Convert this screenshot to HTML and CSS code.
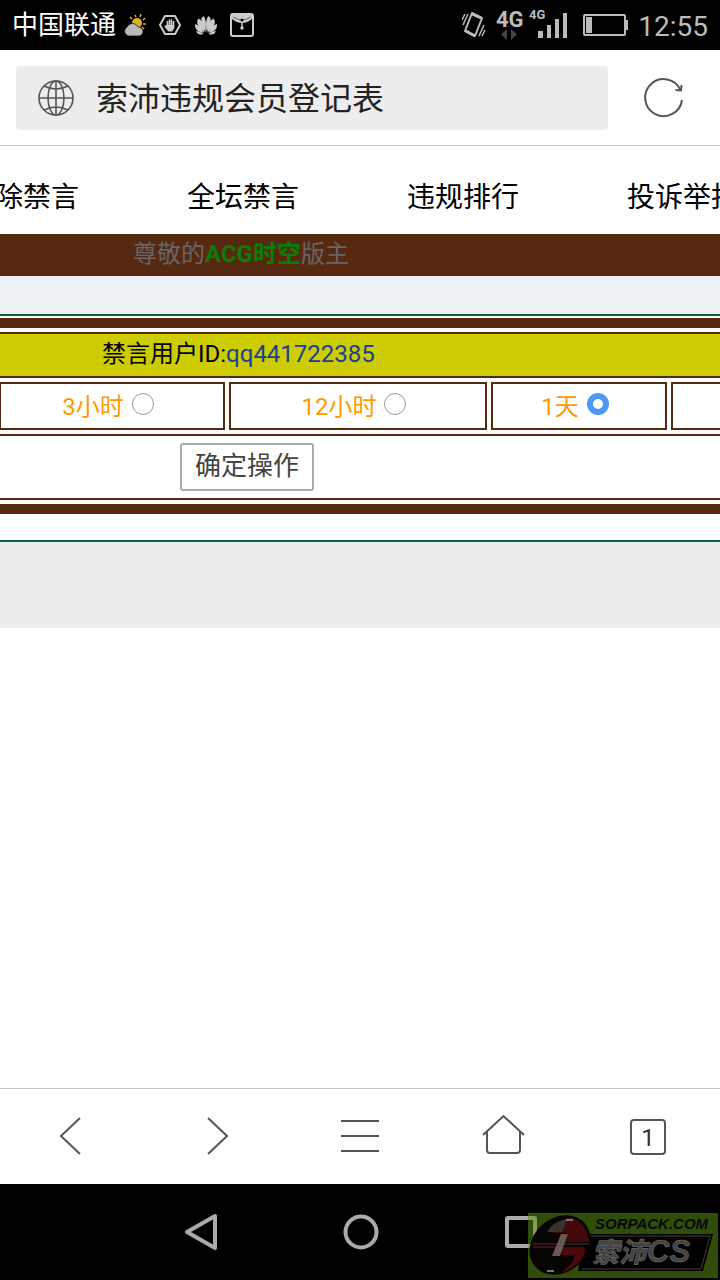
FILE: index.html
```html
<!DOCTYPE html>
<html lang="zh-CN">
<head>
  <meta charset="UTF-8">
  <meta name="viewport" content="width=device-width, initial-scale=1">
  <title>索沛违规会员登记表</title>
  <link rel="stylesheet" href="styles.css">
</head>
<body>
  <div class="status-bar">
    <div class="status-left">
      <span class="carrier">中国联通</span>
      <svg width="24" height="24" viewBox="0 0 24 24">
        <g stroke="#d9ae2c" stroke-width="1.500"><path d="M14 4l-1-2M18 4l1-3M21 7l2-2M21 11h3M20 14l2 2M10 6L8 4"/></g>
        <circle cx="15" cy="10" r="5" fill="#d9ae2c"/>
        <path d="M6 23a5 5 0 0 1-1-9 6 6 0 0 1 11 0 4.500 4.500 0 0 1 1 9z" fill="#b9b9b9" stroke="#000" stroke-width="0.700"/>
      </svg>
      <svg width="24" height="24" viewBox="0 0 24 24">
        <path d="M7 3h10l5 9-5 9H7l-5-9z" fill="none" stroke="#ccc" stroke-width="2" stroke-linejoin="round"/>
        <path d="M9.500 13V8.500M11.500 12V7M13.500 12V7M15.500 13V8.500" stroke="#ccc" stroke-width="1.600" stroke-linecap="round"/>
        <path d="M8.700 12h7.600v3l-2 3.500h-4l-4-5 1-1z" fill="#ccc"/>
      </svg>
      <svg width="24" height="24" viewBox="0 0 24 24" fill="#ccc">
        <path d="M11.500 19Q4 7 9.500 3Q13 6 11.500 19z"/>
        <path d="M12.500 19Q20 7 14.500 3Q11 6 12.500 19z"/>
        <path d="M10.500 19.500Q0 11 4.500 5.500Q9 7 10.500 19.500z"/>
        <path d="M13.500 19.500Q24 11 19.500 5.500Q15 7 13.500 19.500z"/>
        <path d="M9.500 20Q0 18 1 11Q6 12 9.500 20z"/>
        <path d="M14.500 20Q24 18 23 11Q18 12 14.500 20z"/>
        <path d="M9.500 21Q4 23 2 18Q6 18 9.500 21z"/>
        <path d="M14.500 21Q20 23 22 18Q18 18 14.500 21z"/>
      </svg>
      <svg width="24" height="24" viewBox="0 0 24 24">
        <rect x="1" y="1" width="22" height="22" rx="2" fill="none" stroke="#ccc" stroke-width="2"/>
        <path d="M2 1h20v5q-5 4-10 4T2 6z" fill="#ccc"/>
        <path d="M3 4q9 6 18 0" fill="none" stroke="#000" stroke-width="0.500"/>
        <path d="M12 9v7" stroke="#ccc" stroke-width="1.500"/>
        <circle cx="12" cy="7" r="1.500" fill="#000"/>
        <circle cx="12" cy="15" r="1.700" fill="#ccc"/>
      </svg>
    </div>
    <div class="status-right">
      <svg width="24" height="28" viewBox="0 0 24 28" fill="none" stroke="#bbb" stroke-width="1.500">
        <path d="M10 2l10 5-7 18-10-5z" stroke-width="2" stroke-linejoin="round"/>
        <path d="M10 3l9 4M4 20l9 5" stroke-width="3"/>
        <path d="M6 3L1 14M3 3L0 9M22 14l-5 11M23 19l-3 6"/>
      </svg>
      <svg width="74" height="36" viewBox="0 0 74 36">
        <text class="net-main" x="0" y="20">4G</text>
        <path d="M11 22v11l-6-5.500zM15 22v11l6-5.500z" fill="#444"/>
        <text class="net-sub" x="33" y="12">4G</text>
        <path d="M42 24h5v7h-5zM51 18h4v13h-4zM59 12h4v19h-4zM67 6h4v25h-4z" fill="#bbb"/>
      </svg>
      <svg width="48" height="24" viewBox="0 0 48 24">
        <rect x="4" y="2" width="41" height="20" rx="1" fill="none" stroke="#bbb" stroke-width="2"/>
        <path d="M6 4h6v16H6zM46 7h2v10h-2z" fill="#bbb"/>
      </svg>
      <span class="clock">12:55</span>
    </div>
  </div>

  <header class="address-bar">
    <button class="page-title" type="button">
      <svg width="40" height="40" viewBox="0 0 40 40" fill="none" stroke="#555" stroke-width="1.600">
        <circle cx="20" cy="20" r="17"/>
        <ellipse cx="20" cy="20" rx="8" ry="17"/>
        <path d="M20 3v34M3 20h34M8 8q12 6 24 0M8 32q12-6 24 0"/>
      </svg>
      <span>索沛违规会员登记表</span>
    </button>
    <button class="icon-button" type="button" aria-label="刷新">
      <svg width="44" height="44" viewBox="0 0 44 44" fill="none" stroke="#555" stroke-width="2">
        <path d="M38.500 14A18.500 18.500 0 1 0 40 24"/>
        <path d="M33.500 14l5.500.500.500-5.500"/>
      </svg>
    </button>
  </header>

  <main class="page">
    <nav class="tabs">
      <a href="#">解除禁言</a>
      <a href="#">全坛禁言</a>
      <a href="#">违规排行</a>
      <a href="#">投诉举报</a>
    </nav>

    <p class="greeting">尊敬的<strong>ACG时空</strong>版主</p>
    <div class="spacer"></div>

    <form class="ban-form">
      <div class="user-row">禁言用户ID:<a href="#">qq441722385</a></div>
      <div class="time-row">
        <label class="time-cell hours-3">3小时<input type="radio" name="time" value="3h"></label>
        <label class="time-cell hours-12">12小时<input type="radio" name="time" value="12h"></label>
        <label class="time-cell day-1">1天<input type="radio" name="time" value="1d" checked></label>
        <div class="time-cell rest"></div>
      </div>
      <div class="submit-row"><button type="button">确定操作</button></div>
    </form>

    <div class="page-footer"></div>
  </main>

  <nav class="toolbar">
    <button type="button" aria-label="后退">
      <svg width="48" height="48" viewBox="0 0 48 48"><path d="M32 5L13 23l19 18"/></svg>
    </button>
    <button type="button" aria-label="前进">
      <svg width="48" height="48" viewBox="0 0 48 48"><path d="M16 5l19 18-19 18"/></svg>
    </button>
    <button type="button" aria-label="菜单">
      <svg width="48" height="48" viewBox="0 0 48 48"><path d="M5 8h38M5 23h38M5 38h38"/></svg>
    </button>
    <button type="button" aria-label="主页">
      <svg width="48" height="48" viewBox="0 0 48 48"><path d="M3 22L23.500 3 44 22M7 18v19q0 3 3 3h27q3 0 3-3V18"/></svg>
    </button>
    <button type="button" aria-label="标签页">
      <span class="tab-count">1</span>
    </button>
  </nav>

  <div class="system-nav">
    <button type="button" aria-label="返回">
      <svg width="40" height="40" viewBox="0 0 40 40"><path d="M35 4v32L7 20z"/></svg>
    </button>
    <button type="button" aria-label="桌面">
      <svg width="40" height="40" viewBox="0 0 40 40"><circle cx="21" cy="20" r="15.500"/></svg>
    </button>
    <button type="button" aria-label="最近任务">
      <svg width="40" height="40" viewBox="0 0 40 40"><rect x="7" y="6" width="28" height="28" rx="1"/></svg>
    </button>

    <svg class="watermark" width="190" height="65" viewBox="0 0 190 65">
      <rect width="190" height="65" fill="#5c9412" fill-opacity="0.520"/>
      <path d="M56 21h129l-10 37H50z" fill="#000"/>
      <path d="M62 23h121M54 56h119l9-33" fill="none" stroke="#4a3a30"/>
      <ellipse cx="32" cy="32" rx="33" ry="27" fill="#060303" transform="rotate(-42 32 32)"/>
      <path d="M42 4q17 5 19 25H37l3-9H24Q28 8 42 4z" fill="#43090d"/>
      <path d="M19 19q6-11 20-13l-5 13z" fill="#39322d"/>
      <path d="M4 31h29M5 34h29M30 31h31" fill="none" stroke="#5c2a2c"/>
      <path d="M34 34h22q3 8-5 15-7 8-18 11 13-10 14-17l-13-1z" fill="#4b090e"/>
      <path d="M33 21h7l-8 22h-8z" fill="#6b5752"/>
      <path d="M38 7h7M19 58h7" stroke="#777" stroke-width="2"/>
      <text class="mark-url" x="67" y="16">SORPACK.COM</text>
      <text class="mark-name" x="64" y="49">索沛</text>
      <text class="mark-cs" x="119" y="49">CS</text>
    </svg>
  </div>
</body>
</html>
```
FILE: styles.css
```css
* {
  box-sizing: border-box;
}
body {
  margin: 0;
  min-height: 100vh;
  display: flex;
  flex-direction: column;
  overflow-x: hidden;
  background: #fff;
  color: #000;
  font-family: Roboto, "Noto Sans CJK SC", sans-serif;
  font-size: 24px;
}
button {
  padding: 0;
  border: 0;
  background: none;
  font-family: inherit;
  cursor: pointer;
}
svg {
  display: block;
  flex: none;
}
a {
  color: inherit;
  text-decoration: none;
}

/* phone status bar */
.status-bar {
  display: flex;
  justify-content: space-between;
  align-items: center;
  height: 50px;
  padding: 0 12px;
  background: #000;
}
.status-left,
.status-right {
  display: flex;
  align-items: center;
  gap: 12px;
}
.status-right {
  gap: 10px;
}
.carrier {
  margin-right: -6px;
  color: #fff;
  font-size: 26px;
  line-height: 50px;
}
.clock {
  color: #bbb;
  font-size: 28px;
  line-height: 50px;
  padding-top: 4px;
}
.net-main,
.net-sub {
  fill: #bbb;
  font-size: 22px;
  font-weight: 700;
}
.net-sub {
  font-size: 13px;
}

/* browser address bar */
.address-bar {
  display: flex;
  align-items: center;
  height: 96px;
  padding: 0 34px 0 16px;
  gap: 34px;
  border-bottom: 1px solid #ccc;
}
.page-title {
  flex: 1;
  display: flex;
  align-items: center;
  gap: 20px;
  height: 64px;
  padding: 0 20px;
  border-radius: 4px;
  background: #ededed;
  color: #222;
  font-size: 32px;
}
.page-title span {
  padding-bottom: 4px;
}

.page {
  flex: 1;
  overflow: hidden;
}
/* the tab strip is scrolled a little to the right */
.tabs {
  display: flex;
  height: 88px;
  margin-left: -87px;
}
.tabs a {
  flex: none;
  width: 220px;
  font-size: 28px;
  line-height: 104px;
  text-align: center;
}
.greeting {
  margin: 0;
  padding-left: 133px;
  background: #572911;
  color: #666;
  line-height: 40px;
  padding-bottom: 2px;
}
.greeting strong {
  color: #087f08;
}
.spacer {
  height: 40px;
  border-bottom: 2px solid #0b6138;
  background: #edf1f6;
}

.ban-form {
  display: flex;
  flex-direction: column;
  gap: 4px;
  margin-top: 2px;
  padding: 4px 0;
  border-top: 10px solid #572911;
  border-bottom: 10px solid #572911;
}
.user-row,
.submit-row {
  border-top: 2px solid #572911;
  border-bottom: 2px solid #572911;
}
.user-row {
  padding: 0 0 2px 102px;
  background: #cc0;
  line-height: 40px;
}
.user-row a {
  color: #1a3f96;
}
.time-row {
  display: flex;
  gap: 4px;
  margin-left: -1px;
}
.time-cell {
  display: flex;
  justify-content: center;
  align-items: center;
  gap: 8px;
  height: 48px;
  padding: 0 8px 4px 0;
  border: 2px solid #572911;
  color: #f90;
}
.hours-3 {
  width: 226px;
}
.hours-12 {
  width: 258px;
}
.day-1 {
  width: 176px;
}
.rest {
  flex: 1;
  border-right: 0;
}
.time-cell input {
  appearance: none;
  width: 22px;
  height: 22px;
  margin: 0;
  border: 1px solid #999;
  border-radius: 50%;
  background: #fff;
}
.time-cell input:checked {
  border: 6px solid #4d97f5;
}
.submit-row {
  height: 66px;
  padding: 7px 0 0 180px;
}
.submit-row button {
  display: block;
  height: 48px;
  padding: 0 13px 8px;
  border: 2px solid #aaa;
  border-radius: 3px;
  color: #444;
  font-size: 26px;
}
.page-footer {
  height: 88px;
  margin-top: 26px;
  border-top: 2px solid #0b6138;
  background: #ecedef;
}

/* browser toolbar */
.toolbar {
  display: flex;
  height: 96px;
  border-top: 1px solid #c4c4c4;
}
.toolbar button {
  flex: 1;
  display: flex;
  justify-content: center;
  align-items: center;
}
.toolbar svg {
  fill: none;
  stroke: #555;
  stroke-width: 2;
}
.tab-count {
  width: 36px;
  height: 36px;
  border: 2px solid #555;
  border-radius: 4px;
  color: #333;
  font-size: 24px;
  line-height: 34px;
}

/* android keys */
.system-nav {
  position: relative;
  display: flex;
  justify-content: center;
  align-items: center;
  gap: 120px;
  height: 96px;
  background: #000;
}
.system-nav button svg {
  fill: none;
  stroke: #aaa;
  stroke-width: 4;
  stroke-linejoin: round;
}
.watermark {
  position: absolute;
  right: 2px;
  bottom: 2px;
}
.mark-url {
  fill: #080808;
  font: italic 700 15px "Liberation Sans", sans-serif;
}
.mark-name,
.mark-cs {
  fill: #444;
  stroke: #777;
  stroke-width: 0.5px;
  font: italic 900 27px "Noto Sans CJK SC", sans-serif;
}
.mark-cs {
  font: italic 700 31px "Liberation Sans", sans-serif;
}
```
